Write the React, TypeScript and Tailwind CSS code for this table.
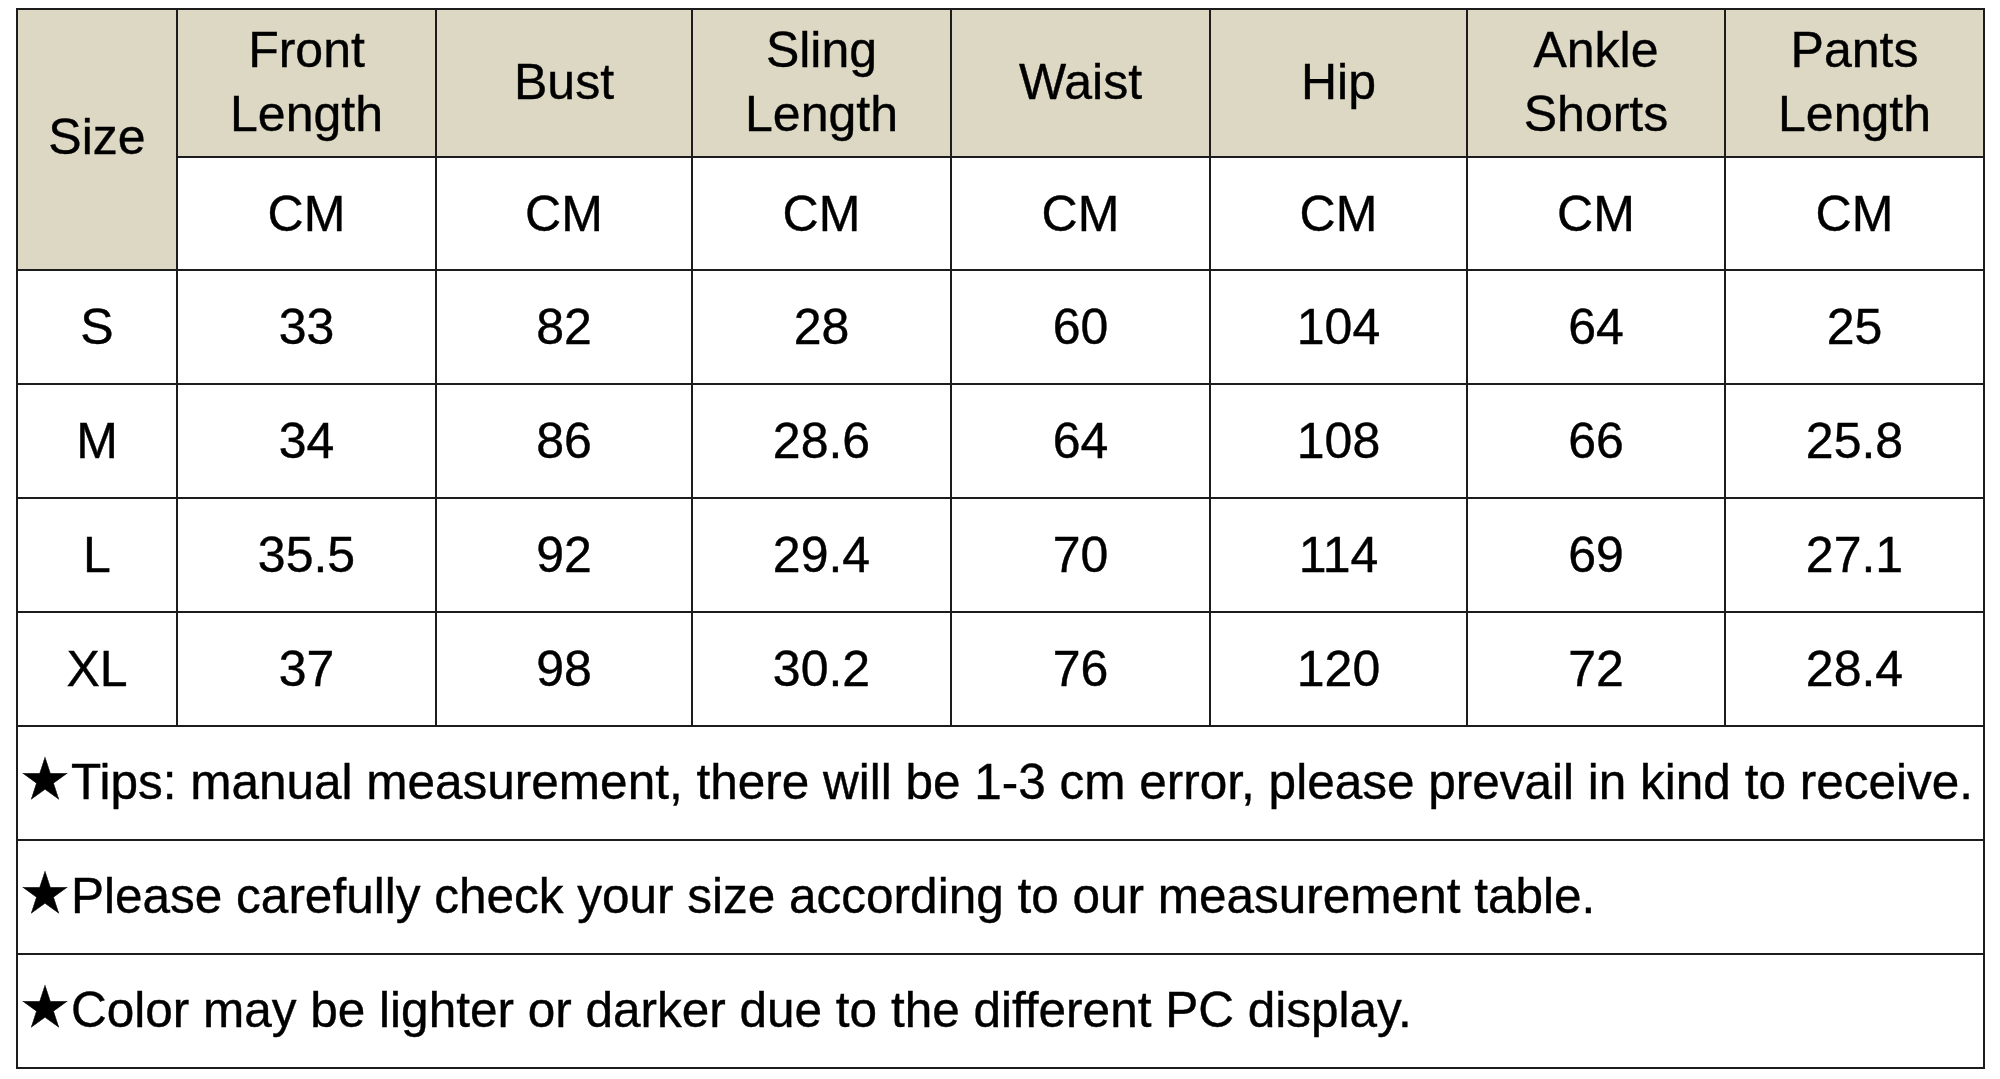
const cols = ["Front Length", "Bust", "Sling Length", "Waist", "Hip", "Ankle Shorts", "Pants Length"];
const widths = ["w-[160px]", "w-[259px]", "w-[256px]", "w-[259px]", "w-[259px]", "w-[257px]", "w-[258px]", "w-[259px]"];

const rows = [
  ["S", "33", "82", "28", "60", "104", "64", "25"],
  ["M", "34", "86", "28.6", "64", "108", "66", "25.8"],
  ["L", "35.5", "92", "29.4", "70", "114", "69", "27.1"],
  ["XL", "37", "98", "30.2", "76", "120", "72", "28.4"],
];

const tips = [
  "Tips: manual measurement, there will be 1-3 cm error, please prevail in kind to receive.",
  "Please carefully check your size according to our measurement table.",
  "Color may be lighter or darker due to the different PC display.",
];

const cell = "border-2 border-[#1c1c1c] text-center align-middle p-0";

export default function App() {
  return (
    <div className="w-[2000px] h-[1079px] bg-white pt-[8px] pl-[16px] font-['Liberation_Sans',Arial,sans-serif] text-black [-webkit-text-stroke:0.4px_#000]">
      <table className="table-fixed border-collapse w-[1967px] text-[50px] leading-none">
        <colgroup>
          {widths.map((w, i) => (
            <col key={i} className={w} />
          ))}
        </colgroup>
        <tbody>
          <tr className="h-[148px] bg-[#ddd8c4]">
            <td rowSpan={2} className={cell + " pb-[6px]"}>
              Size
            </td>
            {cols.map((c) => (
              <td key={c} className={cell + " leading-[64px] pb-[2px]"}>
                {c.split(" ").map((w) => (
                  <div key={w}>{w}</div>
                ))}
              </td>
            ))}
          </tr>
          <tr className="h-[113px] bg-white">
            {cols.map((c) => (
              <td key={c} className={cell}>
                CM
              </td>
            ))}
          </tr>
          {rows.map((r) => (
            <tr key={r[0]} className="h-[114px]">
              {r.map((v, i) => (
                <td key={i} className={cell}>
                  {v}
                </td>
              ))}
            </tr>
          ))}
          {tips.map((t) => (
            <tr key={t} className="h-[114px]">
              <td colSpan={8} className={cell + " text-left pl-[1px] pb-[9px] whitespace-nowrap text-[49.5px]"}>
                <span className="font-['DejaVu_Sans',sans-serif] text-[58px] leading-none">★</span>
                {t}
              </td>
            </tr>
          ))}
        </tbody>
      </table>
    </div>
  );
}
